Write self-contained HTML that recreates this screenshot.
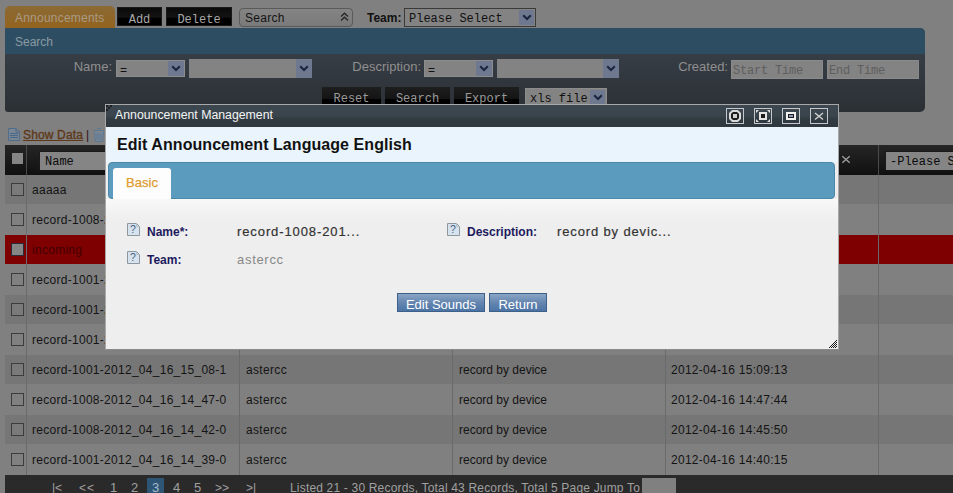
<!DOCTYPE html>
<html><head><meta charset="utf-8">
<style>
*{box-sizing:border-box;margin:0;padding:0}
html,body{width:953px;height:493px;overflow:hidden;background:#808080;font-family:"Liberation Sans",sans-serif;font-size:12px;position:relative}
.a{position:absolute}
.mono{font-family:"Liberation Mono",monospace}
.tab{left:5px;top:6px;width:110px;height:22px;background:linear-gradient(#8a6a34,#94631f);border-radius:5px 5px 0 0;color:#a89a86;font-size:12px;line-height:24px;padding-left:10px;letter-spacing:0.22px}
.btn{top:7px;height:19px;background:linear-gradient(#0a0a0a 0,#131313 55%,#000 58%,#000);color:#a8a8a8;font-size:12px;line-height:24px;text-align:center;overflow:hidden;border:1px solid #1a1a1a}
.panel{left:5px;top:28px;width:920px;height:84px;border-radius:0 5px 5px 3px;background:linear-gradient(#2d4e62 0,#2d4e62 26px,#373d45 26px,#2b3035 100%);overflow:hidden}
.ph{left:0;top:0;width:920px;height:26px;background:#2d4e62;color:#8a9aa2;font-size:12px;line-height:28px;padding-left:10px}
.lbl{color:#8f8f8f;font-size:13px;text-align:right;line-height:16px}
.sel{background:#838383}
.dd{background:#6e788f}
.inp{background:#838383;height:19px;color:#5e5e5e;font-size:12px;line-height:21px;padding-left:1px;letter-spacing:-0.2px;border:1px solid #8a8a8a;overflow:hidden}
.sbtn{top:87px;height:17px;background:linear-gradient(#1e1e1e,#141414 70%,#000 72%);color:#9a9a9a;font-size:12px;line-height:24px;text-align:center;overflow:hidden}
.row{left:5px;width:948px;height:30px}
.cb{width:13px;height:13px;border:1px solid #3c3c3c;background:#7c7c7c}
.cell{top:0px;height:30px;line-height:30px;color:#141414;font-size:12px;white-space:nowrap;overflow:hidden}
.pgi{top:480px;height:16px;line-height:16px;color:#a0a0a0;font-size:12px;white-space:nowrap}
.pgn{font-size:13px;top:480px}
.vline{width:1px;background:#6a6a6a}
</style></head><body>

<!-- top toolbar -->
<div class="a tab">Announcements</div>
<div class="a btn mono" style="left:117px;width:45px">Add</div>
<div class="a btn mono" style="left:166px;width:66px">Delete</div>
<div class="a" style="left:239px;top:8px;width:114px;height:19px;border:1px solid #5a5a5a;border-radius:4px;background:linear-gradient(#848484,#7a7a7a);color:#141414;line-height:18px;padding-left:5px;font-size:12px;letter-spacing:0.3px">Search
  <svg class="a" style="left:100px;top:3px" width="9" height="10" viewBox="0 0 9 10"><path d="M1 4.5 L4.5 1.2 L8 4.5 M1 8.5 L4.5 5.2 L8 8.5" stroke="#262626" stroke-width="1.3" fill="none"/></svg>
</div>
<div class="a" style="left:367px;top:9px;font-weight:bold;color:#111;line-height:19px;font-size:12px">Team:</div>
<div class="a sel mono" style="left:404px;top:8px;width:132px;height:19px;padding-left:4px;line-height:20px;font-size:12px;border:1px solid #3a3a3a;color:#111;overflow:hidden">Please Select<div class="a dd" style="top:1px;right:1px;width:15px;height:15px"><svg class="a" style="left:3px;top:4px" width="10" height="7" viewBox="0 0 10 7"><path d="M1.2 1.2 L5 5 L8.8 1.2" stroke="#1c2640" stroke-width="2.1" fill="none"/></svg></div></div>

<!-- search panel -->
<div class="a panel">
  <div class="a ph">Search</div>
</div>
<div class="a lbl" style="left:30px;top:59px;width:82px">Name:</div>
<div class="a sel " style="left:116px;top:60px;width:69px;height:17px;padding-left:3px;line-height:18px;font-size:12px;border:1px solid #8c8c8c;color:#111">=<div class="a dd" style="top:0px;right:0px;width:16px;height:15px"><svg class="a" style="left:3px;top:4px" width="10" height="7" viewBox="0 0 10 7"><path d="M1.2 1.2 L5 5 L8.8 1.2" stroke="#1c2640" stroke-width="2.1" fill="none"/></svg></div></div>
<div class="a sel " style="left:189px;top:59px;width:123px;height:19px;padding-left:3px;line-height:19px;font-size:12px;border:0"><div class="a dd" style="top:0px;right:0px;width:16px;height:19px"><svg class="a" style="left:3px;top:6px" width="10" height="7" viewBox="0 0 10 7"><path d="M1.2 1.2 L5 5 L8.8 1.2" stroke="#1c2640" stroke-width="2.1" fill="none"/></svg></div></div>
<div class="a lbl" style="left:320px;top:59px;width:101px">Description:</div>
<div class="a sel " style="left:424px;top:60px;width:69px;height:17px;padding-left:3px;line-height:18px;font-size:12px;border:1px solid #8c8c8c;color:#111">=<div class="a dd" style="top:0px;right:0px;width:16px;height:15px"><svg class="a" style="left:3px;top:4px" width="10" height="7" viewBox="0 0 10 7"><path d="M1.2 1.2 L5 5 L8.8 1.2" stroke="#1c2640" stroke-width="2.1" fill="none"/></svg></div></div>
<div class="a sel " style="left:497px;top:59px;width:122px;height:19px;padding-left:3px;line-height:19px;font-size:12px;border:0"><div class="a dd" style="top:0px;right:0px;width:16px;height:19px"><svg class="a" style="left:3px;top:6px" width="10" height="7" viewBox="0 0 10 7"><path d="M1.2 1.2 L5 5 L8.8 1.2" stroke="#1c2640" stroke-width="2.1" fill="none"/></svg></div></div>
<div class="a lbl" style="left:630px;top:59px;width:98px">Created:</div>
<div class="a inp mono" style="left:731px;top:60px;width:92px">Start Time</div>
<div class="a inp mono" style="left:827px;top:60px;width:92px">End Time</div>

<div class="a sbtn mono" style="left:322px;width:59px">Reset</div>
<div class="a sbtn mono" style="left:385px;width:65px">Search</div>
<div class="a sbtn mono" style="left:454px;width:65px">Export</div>
<div class="a sel mono" style="left:525px;top:88px;width:82px;height:17px;padding-left:4px;line-height:21px;font-size:12px;border:1px solid #8c8c8c;color:#111;overflow:hidden">xls file<div class="a dd" style="top:1px;right:1px;width:15px;height:16px"><svg class="a" style="left:3px;top:4px" width="10" height="7" viewBox="0 0 10 7"><path d="M1.2 1.2 L5 5 L8.8 1.2" stroke="#1c2640" stroke-width="2.1" fill="none"/></svg></div></div>

<!-- show data -->
<svg class="a" style="left:8px;top:128px" width="12" height="13" viewBox="0 0 12 13"><path d="M0.5 0.5 H8 L11.5 4 V12.5 H0.5 Z" fill="#7a8694" stroke="#4f6d8c"/><path d="M8 0.5 V4 H11.5" fill="none" stroke="#4f6d8c"/><path d="M2 5.5 H10 M2 7.5 H10 M2 9.5 H10" stroke="#4a6888"/></svg>
<div class="a" style="left:23px;top:127px;color:#5e3818;text-decoration:underline;font-size:12px;line-height:16px;letter-spacing:0.15px;-webkit-text-stroke:0.35px #5e3818">Show Data</div>
<div class="a" style="left:86px;top:127px;color:#2a1018;font-size:12px;line-height:16px">|</div>
<svg class="a" style="left:93px;top:128px" width="12" height="14" viewBox="0 0 12 14"><path d="M4 0.5 H8 M0.5 2.5 H11.5" stroke="#5a7896" stroke-width="1.2"/><path d="M1.5 3.5 L2.5 13.5 H9.5 L10.5 3.5" fill="#7c8894" stroke="#5a7896"/><path d="M4 5 V12 M6 5 V12 M8 5 V12" stroke="#5a7896"/></svg>

<!-- table header -->
<div class="a" style="left:5px;top:145px;width:948px;height:30px;background:linear-gradient(#262626,#101010)"></div>
<div class="a vline" style="left:26px;top:145px;height:30px;background:#4a4a4a"></div>
<div class="a" style="left:12px;top:153px;width:11px;height:11px;background:#858585"></div>
<div class="a mono" style="left:39px;top:151px;width:80px;height:19px;background:#858585;border-top:1px solid #1a1a1a;border-left:1px solid #1a1a1a;color:#0a0a0a;padding-left:5px;line-height:21px;font-size:12px;overflow:hidden">Name</div>
<svg class="a" style="left:841px;top:155px" width="10" height="9" viewBox="0 0 10 9"><path d="M1.3 1.2 L8.7 7.8 M8.7 1.2 L1.3 7.8" stroke="#a0a0a0" stroke-width="1.3"/></svg>
<div class="a vline" style="left:878px;top:145px;height:30px;background:#4a4a4a"></div>
<div class="a mono" style="left:885px;top:151px;width:100px;height:19px;background:#858585;border-top:1px solid #1a1a1a;border-left:1px solid #1a1a1a;color:#0a0a0a;padding-left:4px;line-height:21px;font-size:12px;white-space:nowrap;overflow:hidden">-Please Select</div>

<!-- rows -->
<div id="rows">
<div class="a row" style="top:175px;background:#767676;color:#141414;border-bottom:1px solid #808080"><div class="a cb" style="left:6px;top:8px;background:#7a7a7a;border-color:#3c3c3c"></div><div class="a cell" style="left:27px;width:210px;color:#141414;letter-spacing:0.28px">aaaaa</div><div class="a cell" style="left:241px;width:205px;color:#141414;letter-spacing:0.33px">astercc</div><div class="a cell" style="left:454px;width:205px;color:#141414">aaaaa</div><div class="a cell" style="left:666px;width:205px;color:#141414;letter-spacing:0.28px">2012-04-18 10:12:30</div></div>
<div class="a row" style="top:205px;background:#808080;color:#141414;border-bottom:1px solid #808080"><div class="a cb" style="left:6px;top:8px;background:#808080;border-color:#3c3c3c"></div><div class="a cell" style="left:27px;width:210px;color:#141414;letter-spacing:0.28px">record-1008-2012_04_16_15_21-0</div><div class="a cell" style="left:241px;width:205px;color:#141414;letter-spacing:0.33px">astercc</div><div class="a cell" style="left:454px;width:205px;color:#141414">record by device</div><div class="a cell" style="left:666px;width:205px;color:#141414;letter-spacing:0.28px">2012-04-16 15:22:10</div></div>
<div class="a row" style="top:235px;background:#7f0000;color:#420000;border-bottom:1px solid #808080"><div class="a cb" style="left:6px;top:8px;background:#858585;border-color:#2a2a38"></div><div class="a cell" style="left:27px;width:210px;color:#420000;letter-spacing:0.28px">incoming</div><div class="a cell" style="left:241px;width:205px;color:#420000;letter-spacing:0.33px">astercc</div><div class="a cell" style="left:454px;width:205px;color:#420000">incoming</div><div class="a cell" style="left:666px;width:205px;color:#420000;letter-spacing:0.28px">2012-04-16 15:20:01</div></div>
<div class="a row" style="top:265px;background:#808080;color:#141414;border-bottom:1px solid #808080"><div class="a cb" style="left:6px;top:8px;background:#808080;border-color:#3c3c3c"></div><div class="a cell" style="left:27px;width:210px;color:#141414;letter-spacing:0.28px">record-1001-2012_04_16_15_17-0</div><div class="a cell" style="left:241px;width:205px;color:#141414;letter-spacing:0.33px">astercc</div><div class="a cell" style="left:454px;width:205px;color:#141414">record by device</div><div class="a cell" style="left:666px;width:205px;color:#141414;letter-spacing:0.28px">2012-04-16 15:18:21</div></div>
<div class="a row" style="top:295px;background:#767676;color:#141414;border-bottom:1px solid #808080"><div class="a cb" style="left:6px;top:8px;background:#7a7a7a;border-color:#3c3c3c"></div><div class="a cell" style="left:27px;width:210px;color:#141414;letter-spacing:0.28px">record-1001-2012_04_16_15_12-1</div><div class="a cell" style="left:241px;width:205px;color:#141414;letter-spacing:0.33px">astercc</div><div class="a cell" style="left:454px;width:205px;color:#141414">record by device</div><div class="a cell" style="left:666px;width:205px;color:#141414;letter-spacing:0.28px">2012-04-16 15:13:40</div></div>
<div class="a row" style="top:325px;background:#808080;color:#141414;border-bottom:1px solid #808080"><div class="a cb" style="left:6px;top:8px;background:#808080;border-color:#3c3c3c"></div><div class="a cell" style="left:27px;width:210px;color:#141414;letter-spacing:0.28px">record-1001-2012_04_16_15_10-0</div><div class="a cell" style="left:241px;width:205px;color:#141414;letter-spacing:0.33px">astercc</div><div class="a cell" style="left:454px;width:205px;color:#141414">record by device</div><div class="a cell" style="left:666px;width:205px;color:#141414;letter-spacing:0.28px">2012-04-16 15:11:02</div></div>
<div class="a row" style="top:355px;background:#767676;color:#141414;border-bottom:1px solid #808080"><div class="a cb" style="left:6px;top:8px;background:#7a7a7a;border-color:#3c3c3c"></div><div class="a cell" style="left:27px;width:210px;color:#141414;letter-spacing:0.28px">record-1001-2012_04_16_15_08-1</div><div class="a cell" style="left:241px;width:205px;color:#141414;letter-spacing:0.33px">astercc</div><div class="a cell" style="left:454px;width:205px;color:#141414">record by device</div><div class="a cell" style="left:666px;width:205px;color:#141414;letter-spacing:0.28px">2012-04-16 15:09:13</div></div>
<div class="a row" style="top:385px;background:#808080;color:#141414;border-bottom:1px solid #808080"><div class="a cb" style="left:6px;top:8px;background:#808080;border-color:#3c3c3c"></div><div class="a cell" style="left:27px;width:210px;color:#141414;letter-spacing:0.28px">record-1008-2012_04_16_14_47-0</div><div class="a cell" style="left:241px;width:205px;color:#141414;letter-spacing:0.33px">astercc</div><div class="a cell" style="left:454px;width:205px;color:#141414">record by device</div><div class="a cell" style="left:666px;width:205px;color:#141414;letter-spacing:0.28px">2012-04-16 14:47:44</div></div>
<div class="a row" style="top:415px;background:#767676;color:#141414;border-bottom:1px solid #808080"><div class="a cb" style="left:6px;top:8px;background:#7a7a7a;border-color:#3c3c3c"></div><div class="a cell" style="left:27px;width:210px;color:#141414;letter-spacing:0.28px">record-1008-2012_04_16_14_42-0</div><div class="a cell" style="left:241px;width:205px;color:#141414;letter-spacing:0.33px">astercc</div><div class="a cell" style="left:454px;width:205px;color:#141414">record by device</div><div class="a cell" style="left:666px;width:205px;color:#141414;letter-spacing:0.28px">2012-04-16 14:45:50</div></div>
<div class="a row" style="top:445px;background:#808080;color:#141414;border-bottom:1px solid #808080"><div class="a cb" style="left:6px;top:8px;background:#808080;border-color:#3c3c3c"></div><div class="a cell" style="left:27px;width:210px;color:#141414;letter-spacing:0.28px">record-1001-2012_04_16_14_39-0</div><div class="a cell" style="left:241px;width:205px;color:#141414;letter-spacing:0.33px">astercc</div><div class="a cell" style="left:454px;width:205px;color:#141414">record by device</div><div class="a cell" style="left:666px;width:205px;color:#141414;letter-spacing:0.28px">2012-04-16 14:40:15</div></div>
<div class="a vline" style="left:26px;top:175px;height:300px"></div><div class="a vline" style="left:239px;top:175px;height:300px"></div><div class="a vline" style="left:452px;top:175px;height:300px"></div><div class="a vline" style="left:665px;top:175px;height:300px"></div><div class="a vline" style="left:878px;top:175px;height:300px"></div>
</div>
<!-- /rows -->
<!-- pager -->
<div class="a" style="left:5px;top:475px;width:948px;height:18px;background:#2a2a2a"></div>
<div class="a" style="left:147px;top:478px;width:17px;height:15px;background:#2d5676"></div>
<div class="a pgi" style="left:52px">|&lt;</div><div class="a pgi" style="left:79px;letter-spacing:1px">&lt;&lt;</div><div class="a pgi pgn" style="left:110px">1</div><div class="a pgi pgn" style="left:131px">2</div><div class="a pgi pgn" style="left:173px">4</div><div class="a pgi pgn" style="left:194px">5</div><div class="a pgi" style="left:215px">&gt;&gt;</div><div class="a pgi" style="left:246px">&gt;|</div><div class="a pgi pgn" style="left:152px;color:#a8bccc">3</div>
<div class="a pgi" style="left:290px;letter-spacing:0.18px">Listed 21 - 30 Records, Total 43 Records, Total 5 Page Jump To</div>
<div class="a" style="left:642px;top:478px;width:34px;height:15px;background:#808080"></div>

<!-- dialog -->
<div class="a" style="left:105px;top:104px;width:734px;height:246px;border:1px solid #a8a8a8;border-bottom-color:#8a8a8a;background:#eeeeee;overflow:hidden">
  <div class="a" style="left:0;top:0;width:732px;height:22px;background:linear-gradient(#3c474f 0,#39444c 50%,#313b41 62%,#2e373d 100%)"></div>
  <svg class="a" style="left:620px;top:3px" width="18" height="16" viewBox="0 0 18 16"><rect x="0.5" y="0.5" width="17" height="15" fill="none" stroke="#c4c8cc"/><path d="M6.5 3 H11.5 L14 5.5 V10.5 L11.5 13 H6.5 L4 10.5 V5.5 Z" fill="#1c1c1c" stroke="#d8d8d8" stroke-width="2"/><rect x="7" y="6" width="4" height="4" fill="#d0d0d0"/></svg>
  <svg class="a" style="left:648px;top:3px" width="18" height="16" viewBox="0 0 18 16"><rect x="0.5" y="0.5" width="17" height="15" fill="none" stroke="#c4c8cc"/><rect x="6" y="5" width="6" height="6" fill="#1c1c1c" stroke="#e4e4e4" stroke-width="2"/><path d="M2 2 H5 L2 5 Z M16 2 V5 L13 2 Z M2 14 V11 L5 14 Z M16 14 H13 L16 11 Z" fill="#e0e0e0"/></svg>
  <svg class="a" style="left:676px;top:3px" width="18" height="16" viewBox="0 0 18 16"><rect x="0.5" y="0.5" width="17" height="15" fill="none" stroke="#c4c8cc"/><rect x="5" y="5" width="8" height="6" fill="#1c1c1c" stroke="#f2f2f2" stroke-width="2"/><rect x="7" y="7" width="4" height="2" fill="#8a9ab8"/></svg>
  <svg class="a" style="left:704px;top:3px" width="18" height="16" viewBox="0 0 18 16"><rect x="0.5" y="0.5" width="17" height="15" fill="none" stroke="#c4c8cc"/><path d="M5 5 L13 11.5 M13 5 L5 11.5" stroke="#d4d4d4" stroke-width="1.3"/></svg>
  <svg class="a" style="left:0;top:0" width="8" height="8" viewBox="0 0 8 8"><path d="M0 0 H2 V2 H0Z M4 0 H6 V2 H4Z M2 2 H4 V4 H2Z M0 4 H2 V6 H0Z" fill="#1a1e22"/></svg>
  <div class="a" style="left:9px;top:0;color:#f4f4f4;font-size:12.3px;line-height:21px">Announcement Management</div>
  <div class="a" style="left:0;top:22px;width:732px;height:35px;background:#eaf4fc"></div>
  <div class="a" style="left:11px;top:30px;color:#111;font-weight:bold;font-size:16px;line-height:20px;letter-spacing:0.06px">Edit Announcement Language English</div>
  <div class="a" style="left:2px;top:57px;width:727px;height:37px;background:#5b9bbd;border:1px solid #4a88aa;border-radius:4px"></div>
  <div class="a" style="left:7px;top:63px;width:58px;height:31px;background:#fdfdfd;border-radius:3px 3px 0 0;color:#e09b30;font-size:13px;line-height:30px;text-align:center;-webkit-text-stroke:0.25px #e09b30">Basic</div>
  <div class="a" style="left:0;top:94px;width:732px;height:151px;background:linear-gradient(#f8f8f8,#eeeeee 22px)"></div>
  <svg class="a" style="left:21px;top:118px" width="13" height="13" viewBox="0 0 13 13"><path d="M0.5 0.5 H9.5 L12.5 3.5 V12.5 H0.5 Z" fill="#d6e2ee" stroke="#8e969e"/><path d="M9.5 0.5 V3.5 H12.5" fill="none" stroke="#b8c0c8"/><text x="5.8" y="10.3" font-size="10.5" font-family="Liberation Sans" fill="#4a6280" text-anchor="middle">?</text></svg>
  <div class="a" style="left:41px;top:119px;color:#1d1a5e;font-weight:bold;font-size:12px;line-height:16px">Name*:</div>
  <div class="a" style="left:131px;top:118px;color:#333;font-size:13px;line-height:18px;letter-spacing:0.9px;-webkit-text-stroke:0.2px #333">record-1008-201...</div>
  <svg class="a" style="left:341px;top:118px" width="13" height="13" viewBox="0 0 13 13"><path d="M0.5 0.5 H9.5 L12.5 3.5 V12.5 H0.5 Z" fill="#d6e2ee" stroke="#8e969e"/><path d="M9.5 0.5 V3.5 H12.5" fill="none" stroke="#b8c0c8"/><text x="5.8" y="10.3" font-size="10.5" font-family="Liberation Sans" fill="#4a6280" text-anchor="middle">?</text></svg>
  <div class="a" style="left:361px;top:119px;color:#1d1a5e;font-weight:bold;font-size:12px;line-height:16px">Description:</div>
  <div class="a" style="left:451px;top:118px;color:#333;font-size:13px;line-height:18px;letter-spacing:0.86px;-webkit-text-stroke:0.2px #333">record by devic...</div>
  <svg class="a" style="left:21px;top:146px" width="13" height="13" viewBox="0 0 13 13"><path d="M0.5 0.5 H9.5 L12.5 3.5 V12.5 H0.5 Z" fill="#d6e2ee" stroke="#8e969e"/><path d="M9.5 0.5 V3.5 H12.5" fill="none" stroke="#b8c0c8"/><text x="5.8" y="10.3" font-size="10.5" font-family="Liberation Sans" fill="#4a6280" text-anchor="middle">?</text></svg>
  <div class="a" style="left:41px;top:147px;color:#1d1a5e;font-weight:bold;font-size:12px;line-height:16px">Team:</div>
  <div class="a" style="left:131px;top:146px;color:#888;font-size:13px;line-height:18px;letter-spacing:0.7px">astercc</div>
  <div class="a" style="left:291px;top:188px;width:88px;height:19px;border:1px solid #3d5f88;background:linear-gradient(#8aa6c6,#6686b0 50%,#4a74a6);color:#fff;font-size:13px;line-height:21px;text-align:center;overflow:hidden">Edit Sounds</div>
  <div class="a" style="left:383px;top:188px;width:58px;height:19px;border:1px solid #3d5f88;background:linear-gradient(#8aa6c6,#6686b0 50%,#4a74a6);color:#fff;font-size:13px;line-height:21px;text-align:center;overflow:hidden">Return</div>
  <svg class="a" style="left:723px;top:235px" width="8" height="8" viewBox="0 0 8 8" fill="#1a1a1a"><rect x="7" y="0" width="1" height="1"/><rect x="6" y="1" width="1" height="1"/><rect x="5" y="2" width="1" height="1"/><rect x="7" y="2" width="1" height="1"/><rect x="4" y="3" width="1" height="1"/><rect x="6" y="3" width="1" height="1"/><rect x="3" y="4" width="1" height="1"/><rect x="5" y="4" width="1" height="1"/><rect x="7" y="4" width="1" height="1"/><rect x="2" y="5" width="1" height="1"/><rect x="4" y="5" width="1" height="1"/><rect x="6" y="5" width="1" height="1"/><rect x="1" y="6" width="1" height="1"/><rect x="3" y="6" width="1" height="1"/><rect x="5" y="6" width="1" height="1"/><rect x="7" y="6" width="1" height="1"/><rect x="0" y="7" width="1" height="1"/><rect x="2" y="7" width="1" height="1"/><rect x="4" y="7" width="1" height="1"/><rect x="6" y="7" width="1" height="1"/></svg>
</div>

</body></html>
